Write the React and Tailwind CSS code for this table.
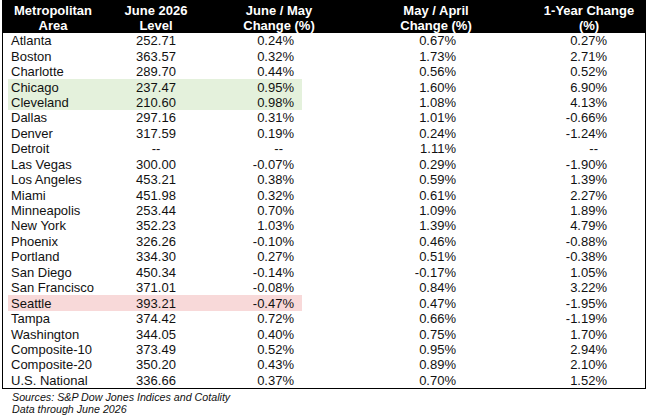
import React from "react";

const rows = [
  ["Atlanta", "252.71", "0.24%", "0.67%", "0.27%"],
  ["Boston", "363.57", "0.32%", "1.73%", "2.71%"],
  ["Charlotte", "289.70", "0.44%", "0.56%", "0.52%"],
  ["Chicago", "237.47", "0.95%", "1.60%", "6.90%", "green"],
  ["Cleveland", "210.60", "0.98%", "1.08%", "4.13%", "green"],
  ["Dallas", "297.16", "0.31%", "1.01%", "-0.66%"],
  ["Denver", "317.59", "0.19%", "0.24%", "-1.24%"],
  ["Detroit", "--", "--", "1.11%", "--"],
  ["Las Vegas", "300.00", "-0.07%", "0.29%", "-1.90%"],
  ["Los Angeles", "453.21", "0.38%", "0.59%", "1.39%"],
  ["Miami", "451.98", "0.32%", "0.61%", "2.27%"],
  ["Minneapolis", "253.44", "0.70%", "1.09%", "1.89%"],
  ["New York", "352.23", "1.03%", "1.39%", "4.79%"],
  ["Phoenix", "326.26", "-0.10%", "0.46%", "-0.88%"],
  ["Portland", "334.30", "0.27%", "0.51%", "-0.38%"],
  ["San Diego", "450.34", "-0.14%", "-0.17%", "1.05%"],
  ["San Francisco", "371.01", "-0.08%", "0.84%", "3.22%"],
  ["Seattle", "393.21", "-0.47%", "0.47%", "-1.95%", "red"],
  ["Tampa", "374.42", "0.72%", "0.66%", "-1.19%"],
  ["Washington", "344.05", "0.40%", "0.75%", "1.70%"],
  ["Composite-10", "373.49", "0.52%", "0.95%", "2.94%"],
  ["Composite-20", "350.20", "0.43%", "0.89%", "2.10%"],
  ["U.S. National", "336.66", "0.37%", "0.70%", "1.52%"],
];

function Row({ r }) {
  const [area, level, jm, ma, yr, mark] = r;
  const hl = mark === "green" ? "bg-[#e4f1dc]" : mark === "red" ? "bg-[#f8d9d9]" : "";
  return (
    <div className="flex h-[15.45px] items-center leading-none">
      <div className="w-[5px] shrink-0" />
      <div className={`flex h-full w-[294px] shrink-0 items-center ${hl}`}>
        <div className="w-[96px] pl-[3px]">{area}</div>
        <div className="w-[104px] text-center">{level}</div>
        <div className={`w-[94px] text-right ${jm === "--" ? "pr-[19px]" : "pr-[8px]"}`}>{jm}</div>
      </div>
      <div className="w-[154px] shrink-0 text-right">{ma}</div>
      <div className={`w-[189px] shrink-0 text-right ${yr === "--" ? "pr-[47px]" : "pr-[38px]"}`}>{yr}</div>
    </div>
  );
}

export default function App() {
  return (
    <div className="h-[415px] w-[651px] bg-white text-[13px] text-[#111]" style={{ fontFamily: '"Liberation Sans", Arial, sans-serif' }}>
      <div className="ml-[2px] w-[644px] border-x border-b border-black">
        <div className="flex h-[33px] bg-black pt-[3px] text-center font-bold leading-[15px] text-white">
          <div className="w-[100px]">Metropolitan<br />Area</div>
          <div className="w-[106px]">June 2026<br />Level</div>
          <div className="w-[140px]">June / May<br />Change (%)</div>
          <div className="w-[174px]">May / April<br />Change (%)</div>
          <div className="w-[122px] pl-[10px]">1-Year Change<br />(%)</div>
        </div>
        {rows.map((r) => (
          <Row key={r[0]} r={r} />
        ))}
      </div>
      <div className="pl-[12px] pt-[2px] text-[10.7px] italic leading-[12px]">
        <div>Sources: S&amp;P Dow Jones Indices and Cotality</div>
        <div>Data through June 2026</div>
      </div>
    </div>
  );
}
